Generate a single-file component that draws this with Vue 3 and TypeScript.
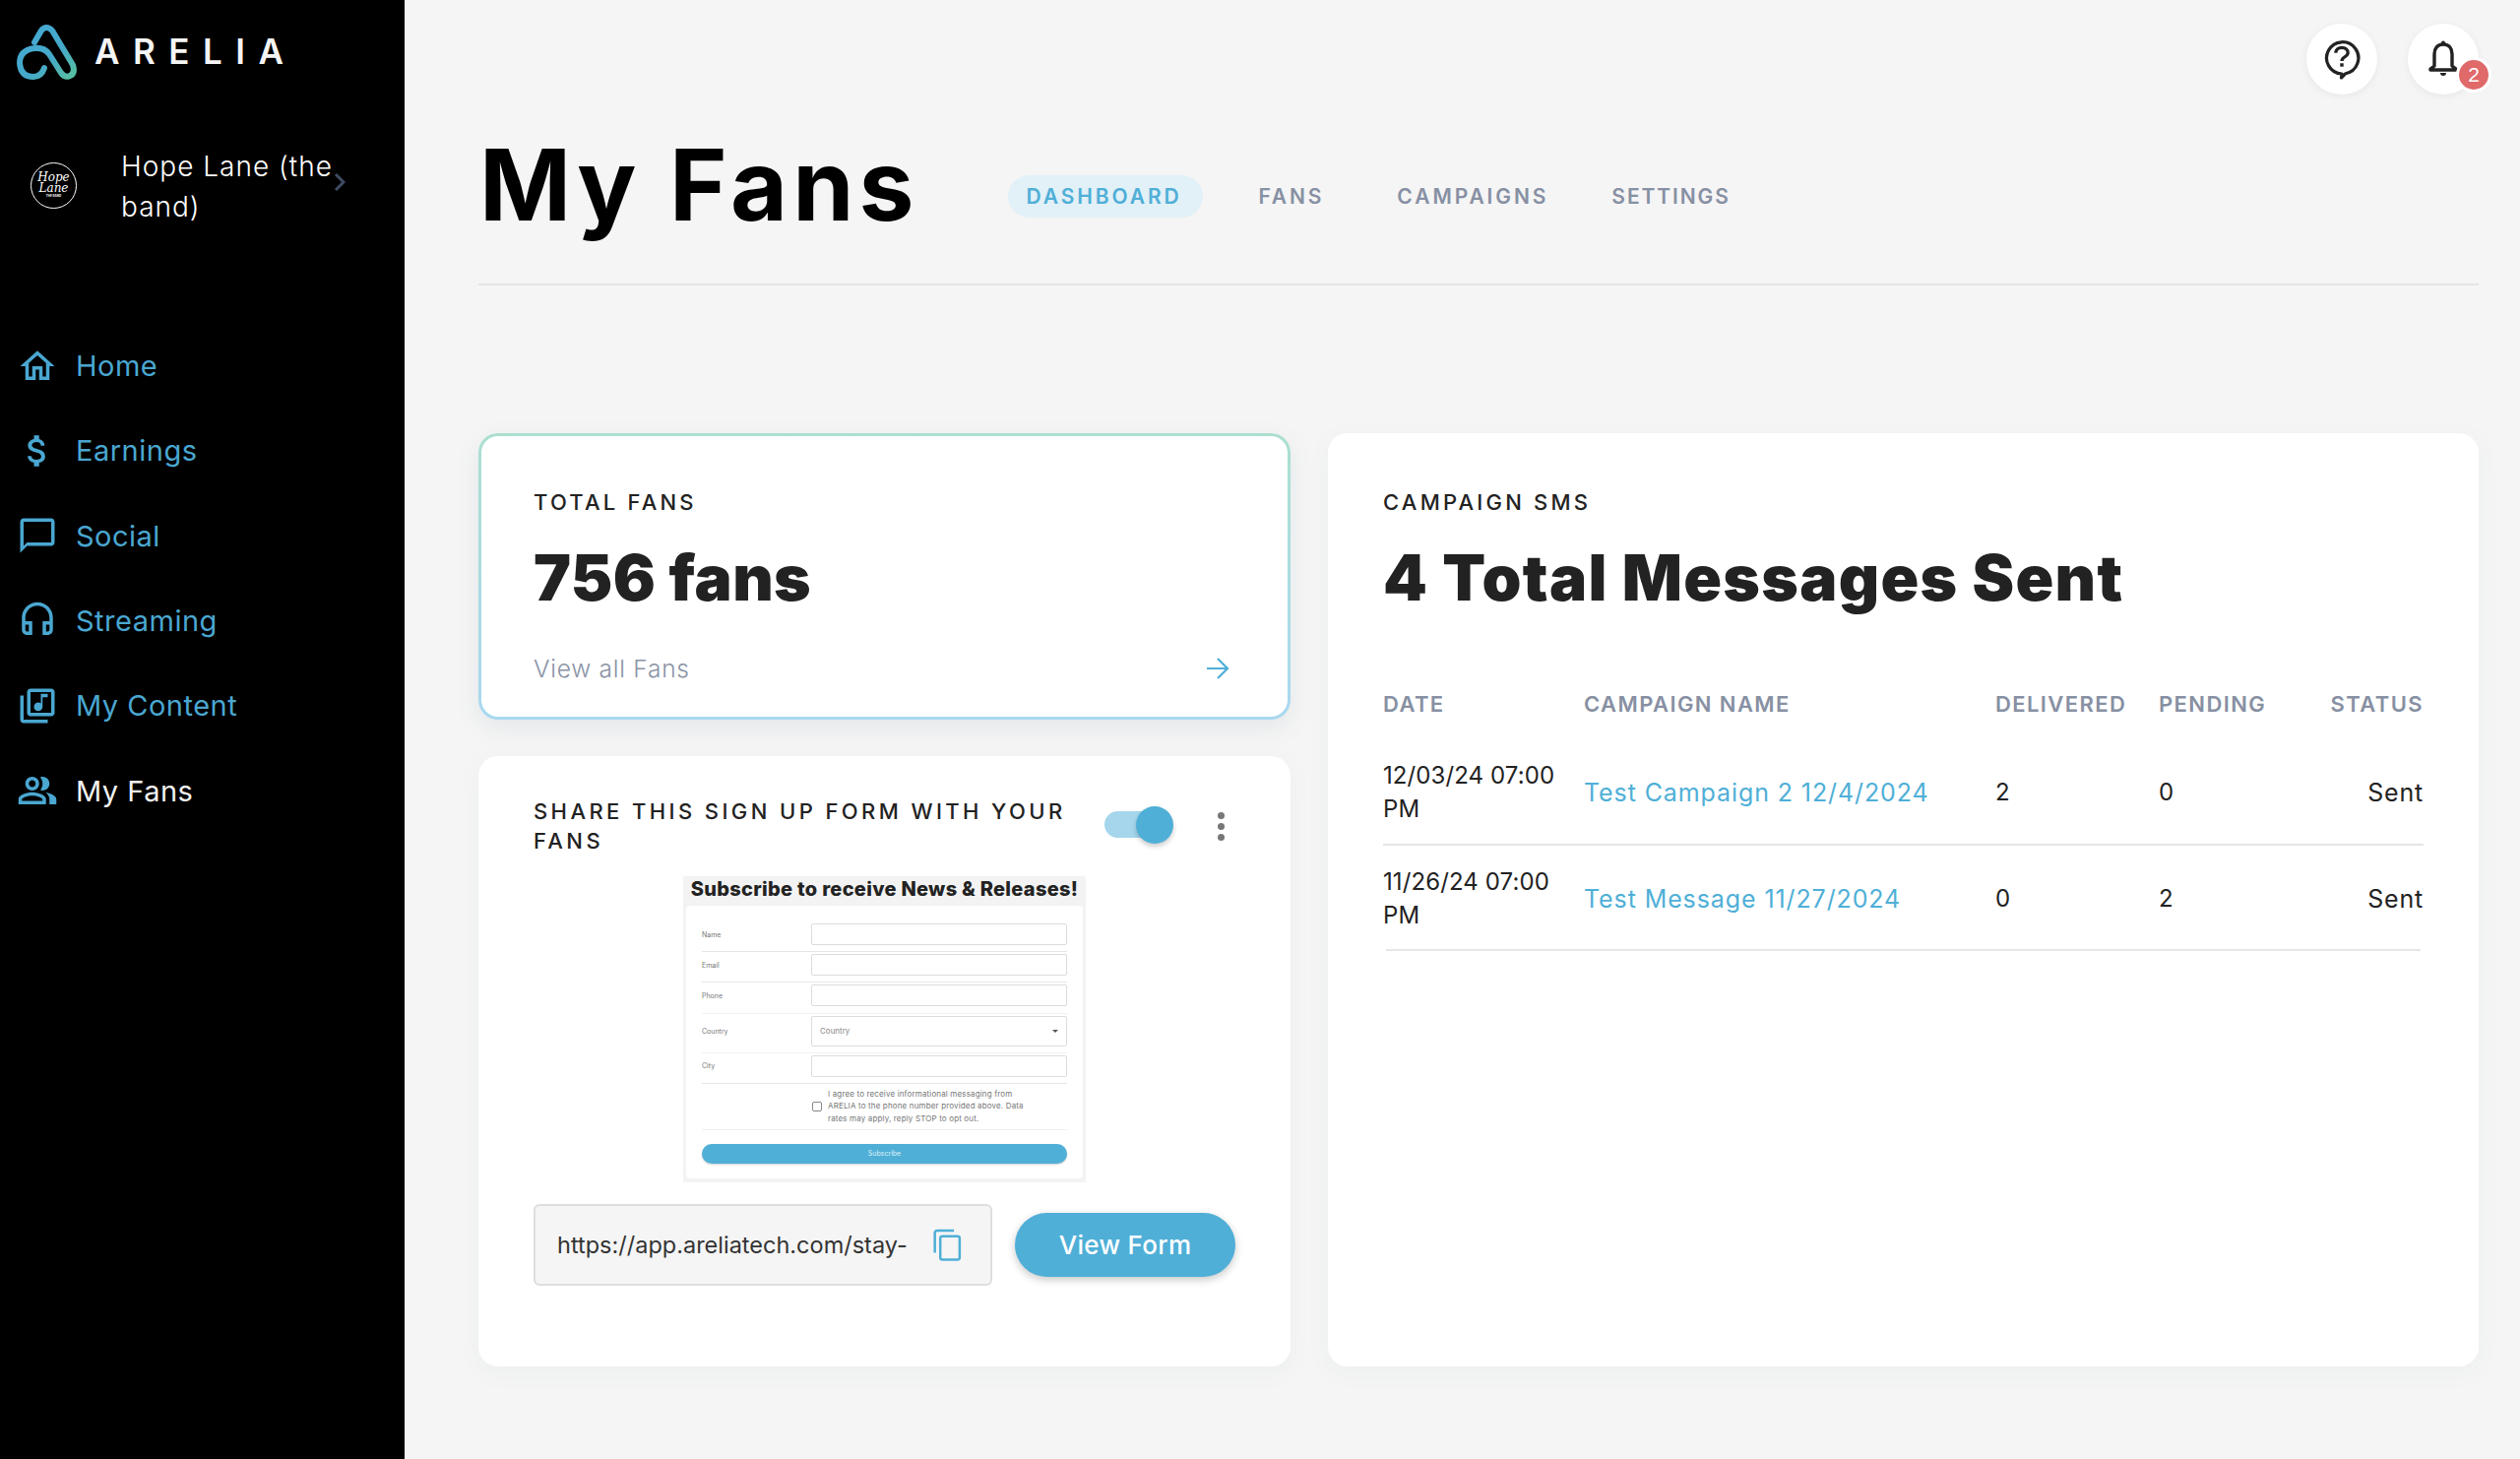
<script setup lang="ts">
interface NavItem { label: string; paths: string[]; active?: boolean }
interface Row { date: string; name: string; delivered: number; pending: number; status: string }
interface FormRow { label: string; kind?: 'select'; faint?: boolean }

const nav: NavItem[] = [
  { label: 'Home', paths: ['M12 5.69l5 4.5V18h-2v-6H9v6H7v-7.81l5-4.5M12 3L2 12h3v8h6v-6h2v6h6v-8h3L12 3z'] },
  { label: 'Earnings', paths: ['M11.8 10.9c-2.27-.59-3-1.2-3-2.15 0-1.09 1.01-1.85 2.7-1.85 1.78 0 2.44.85 2.5 2.1h2.21c-.07-1.72-1.12-3.3-3.21-3.81V3h-3v2.16c-1.94.42-3.5 1.68-3.5 3.61 0 2.31 1.91 3.46 4.7 4.13 2.5.6 3 1.48 3 2.41 0 .69-.49 1.79-2.7 1.79-2.06 0-2.87-.92-2.98-2.1h-2.2c.12 2.19 1.76 3.42 3.68 3.83V21h3v-2.15c1.95-.37 3.5-1.5 3.5-3.55 0-2.84-2.43-3.81-4.7-4.4z'] },
  { label: 'Social', paths: ['M20 2H4c-1.1 0-2 .9-2 2v18l4-4h14c1.1 0 2-.9 2-2V4c0-1.1-.9-2-2-2zm0 14H6l-2 2V4h16v12z'] },
  { label: 'Streaming', paths: ['M12 1c-4.97 0-9 4.03-9 9v7c0 1.66 1.34 3 3 3h3v-8H5v-2c0-3.87 3.13-7 7-7s7 3.13 7 7v2h-4v8h3c1.66 0 3-1.34 3-3v-7c0-4.97-4.03-9-9-9zM7 14v4H6c-.55 0-1-.45-1-1v-3h2zm12 3c0 .55-.45 1-1 1h-1v-4h2v3z'] },
  { label: 'My Content', paths: ['M20 2H8c-1.1 0-2 .9-2 2v12c0 1.1.9 2 2 2h12c1.1 0 2-.9 2-2V4c0-1.1-.9-2-2-2zm0 14H8V4h12v12zm-7.5-1c1.38 0 2.5-1.12 2.5-2.5V7h3V5h-4v5.51c-.42-.32-.93-.51-1.5-.51-1.38 0-2.5 1.12-2.5 2.5s1.12 2.5 2.5 2.5zM4 6H2v14c0 1.1.9 2 2 2h14v-2H4V6z'] },
  { label: 'My Fans', active: true, paths: ['M16.67 13.13C18.04 14.06 19 15.32 19 17v3h4v-3c0-2.18-3.57-3.47-6.33-3.87z', 'M15 12c2.21 0 4-1.79 4-4s-1.79-4-4-4c-.47 0-.91.1-1.33.24C14.5 5.27 15 6.58 15 8s-.5 2.73-1.33 3.76c.42.14.86.24 1.33.24z', 'M9 13c-2.67 0-8 1.34-8 4v3h16v-3c0-2.66-5.33-4-8-4zm6 5H3v-.99C3.2 16.29 6.3 15 9 15s5.8 1.29 6 2v1z', 'M9 12c2.21 0 4-1.79 4-4s-1.79-4-4-4-4 1.79-4 4 1.79 4 4 4zm0-6c1.1 0 2 .9 2 2s-.9 2-2 2-2-.9-2-2 .9-2 2-2z'] },
]
const tabs: string[] = ['DASHBOARD', 'FANS', 'CAMPAIGNS', 'SETTINGS']
const rows: Row[] = [
  { date: '12/03/24 07:00 PM', name: 'Test Campaign 2 12/4/2024', delivered: 2, pending: 0, status: 'Sent' },
  { date: '11/26/24 07:00 PM', name: 'Test Message 11/27/2024', delivered: 0, pending: 2, status: 'Sent' },
]
const formRows: FormRow[] = [
  { label: 'Name' },
  { label: 'Email' },
  { label: 'Phone', faint: true },
  { label: 'Country', kind: 'select', faint: true },
  { label: 'City' },
]
</script>

<template>
  <div class="app">
    <aside class="sidebar">
      <div class="brand">
        <svg class="logo" viewBox="0 0 61 57" fill="none">
          <defs>
            <linearGradient id="lg" x1="0" y1="0" x2="1" y2="1">
              <stop offset="0" stop-color="#45a9d6" />
              <stop offset="0.6" stop-color="#45a9c8" />
              <stop offset="1" stop-color="#58c0a0" />
            </linearGradient>
          </defs>
          <path d="M18 19 L25 7 Q30 1 36 7 L57 42 Q60 51 53 53.500 Q48 54.500 45 50 L33 31 Q28 24 18 25 Q3 27 3 40 Q4 54 17 54 Q25 54 28 45" stroke="url(#lg)" stroke-width="6" stroke-linecap="round" stroke-linejoin="round" />
        </svg>
        <span class="wordmark">ARELIA</span>
      </div>

      <div class="account">
        <div class="avatar">
          <span class="avatar-script">Hope<br />Lane</span>
          <span class="avatar-small">THE BAND</span>
        </div>
        <span class="account-name">Hope Lane (the band)</span>
        <svg class="chevron" viewBox="0 0 12 20" fill="none"><path d="M2 2l8 8-8 8" stroke="#3f4b63" stroke-width="3" /></svg>
      </div>

      <nav class="nav">
        <a v-for="item in nav" :key="item.label" class="nav-item" :class="{ active: item.active }">
          <svg class="nav-icon" viewBox="0 0 24 24" fill="#4aa7d1"><path v-for="p in item.paths" :key="p" :d="p" /></svg>
          <span>{{ item.label }}</span>
        </a>
      </nav>
    </aside>

    <main class="main">
      <div class="actions">
        <button class="round">
          <svg viewBox="0 0 40 44" width="38" height="42" fill="none">
            <path d="M24 37.500A17 17 0 1 0 20 37.800L19.500 42Z" stroke="#222" stroke-width="3.400" stroke-linejoin="round" />
            <path d="M13.500 15.500c0-3.700 2.900-5.800 6.500-5.800s6.500 2.200 6.500 5.500c0 4.600-6.500 4.300-6.500 8.800" stroke="#222" stroke-width="3.400" />
            <rect x="18.200" y="26.500" width="3.600" height="3.600" fill="#222" />
          </svg>
        </button>
        <button class="round">
          <svg viewBox="0 0 36 40" width="36" height="40" fill="none">
            <path d="M18 5c-6 0-9 4.500-9 10v12l-4 3v1h26v-1l-4-3V15c0-5.500-3-10-9-10z" stroke="#222" stroke-width="3.400" stroke-linejoin="round" />
            <rect x="16" y="1.500" width="4" height="4" rx="2" fill="#222" />
            <path d="M15 34h6a3 3 0 0 1-6 0z" fill="#222" />
          </svg>
          <span class="badge">2</span>
        </button>
      </div>

      <header class="page-head">
        <h1 class="page-title">My Fans</h1>
        <div class="tabs">
          <a v-for="(t, i) in tabs" :key="t" class="tab" :class="['tab-' + i, { on: i === 0 }]">{{ t }}</a>
        </div>
      </header>

      <section class="grid">
        <div class="left-col">
          <article class="card total">
            <div class="total-inner">
              <h2 class="eyebrow">TOTAL FANS</h2>
              <div class="big">756 fans</div>
              <div class="view-all">
                <span>View all Fans</span>
                <svg viewBox="0 0 24 24" width="24" height="24" fill="none"><path d="M1 12h21M12 2l10 10-10 10" stroke="#4fafd7" stroke-width="2.200" /></svg>
              </div>
            </div>
          </article>

          <article class="card share">
            <div class="share-head">
              <h2 class="eyebrow share-title">SHARE THIS SIGN UP FORM WITH YOUR FANS</h2>
              <div class="toggle"><span class="knob"></span></div>
              <div class="dots"><i></i><i></i><i></i></div>
            </div>

            <div class="preview">
              <div class="preview-title">Subscribe to receive News &amp; Releases!</div>
              <div class="preview-card">
                <div v-for="r in formRows" :key="r.label" class="f-row" :class="{ faint: r.faint, tall: r.kind === 'select' }">
                  <span class="f-label">{{ r.label }}</span>
                  <div class="f-input">
                    <template v-if="r.kind === 'select'"><span>Country</span><b class="caret"></b></template>
                  </div>
                </div>
                <div class="f-consent">
                  <i class="f-check"></i>
                  <span class="f-consent-text">I agree to receive informational messaging from<br />ARELIA to the phone number provided above. Data<br />rates may apply, reply STOP to opt out.</span>
                </div>
                <div class="f-submit">Subscribe</div>
              </div>
            </div>

            <div class="share-foot">
              <div class="url">
                <span class="url-text">https://app.areliatech.com/stay-</span>
                <svg viewBox="0 0 24 24" width="35" height="35" fill="none" stroke="#4fafd7" stroke-width="1.700"><rect x="7" y="6" width="13.500" height="16.300" rx="1.500" /><path d="M16.500 2H5A1.800 1.800 0 0 0 3.200 3.800V17.500" /></svg>
              </div>
              <button class="view-form">View Form</button>
            </div>
          </article>
        </div>

        <article class="card sms">
          <h2 class="eyebrow">CAMPAIGN SMS</h2>
          <div class="big">4 Total Messages Sent</div>
          <div class="table">
            <div class="tr th">
              <span>DATE</span><span>CAMPAIGN NAME</span><span>DELIVERED</span><span>PENDING</span><span class="right">STATUS</span>
            </div>
            <div v-for="r in rows" :key="r.name" class="tr td">
              <span class="date">{{ r.date }}</span>
              <a class="link">{{ r.name }}</a>
              <span>{{ r.delivered }}</span>
              <span>{{ r.pending }}</span>
              <span class="right sent">{{ r.status }}</span>
            </div>
          </div>
        </article>
      </section>
    </main>
  </div>
</template>

<style>
html, body { margin: 0; background: #f5f5f5; }
</style>

<style scoped>
* { box-sizing: border-box; }
.app {
  display: flex;
  width: 2560px;
  height: 1482px;
  overflow: hidden;
  background: #f5f5f5;
  font-family: Inter, "Open Sans", "Liberation Sans", sans-serif;
  color: #222;
}
.sidebar { width: 411px; flex: none; background: #000; display: flex; flex-direction: column; }
.brand { display: flex; align-items: center; height: 57px; margin: 24px 0 0 17px; }
.logo { width: 61px; height: 57px; flex: none; }
.wordmark { margin-left: 18px; color: #f4f4f4; font-size: 35px; font-weight: 600; letter-spacing: 13.500px; line-height: 1; }
.account { display: flex; align-items: flex-start; margin: 65px 0 0 31px; position: relative; height: 84px; }
.avatar { width: 47px; height: 47px; flex: none; margin-top: 19px; border: 1.500px solid #fff; border-radius: 50%; display: flex; flex-direction: column; align-items: center; justify-content: center; color: #fff; overflow: hidden; }
.avatar-script { font-family: "DejaVu Serif", serif; font-style: italic; font-size: 12px; line-height: 11px; text-align: center; }
.avatar-small { font-size: 3px; line-height: 5px; font-weight: 700; }
.account-name { margin: 3px 0 0 45px; width: 226px; color: #fff; font-size: 28px; font-weight: 300; line-height: 40.500px; letter-spacing: 1px; }
.chevron { position: absolute; left: 308px; top: 29px; width: 12px; height: 20px; }
.nav { display: flex; flex-direction: column; margin-top: 98.500px; }
.nav-item { display: flex; align-items: center; height: 86.300px; padding-left: 17px; color: #4aa7d1; font-size: 29px; font-weight: 400; letter-spacing: 0.500px; }
.nav-item.active { color: #f2f2f2; }
.nav-icon { width: 42px; height: 42px; flex: none; margin-right: 18px; }

.main { flex: 1; padding: 24px 42px 0 75px; min-width: 0; }
.actions { display: flex; justify-content: flex-end; gap: 31px; height: 72px; }
.round { position: relative; width: 72px; height: 72px; border: 0; padding: 0; border-radius: 50%; background: #fff; box-shadow: 0 2px 8px rgba(0,0,0,.06); display: flex; align-items: center; justify-content: center; }
.badge { position: absolute; left: 49px; top: 34px; width: 36px; height: 36px; border: 3px solid #fff; border-radius: 50%; background: #e0696a; color: #fff; font-size: 21px; line-height: 30px; text-align: center; }
.page-head { display: flex; align-items: center; height: 194px; border-bottom: 2px solid #e4e4e4; padding-bottom: 12px; }
.page-title { margin: 3px 0 0 1px; font-size: 100px; font-weight: 700; line-height: 1; color: #000; letter-spacing: 5px; }
.tabs { display: flex; align-items: center; margin-left: 91px; margin-top: 26px; }
.tab { display: block; color: #8790a3; font-size: 21px; font-weight: 600; letter-spacing: 2.900px; height: 43px; line-height: 43px; padding: 0 18px; border-radius: 22px; }
.tab.on { background: #e2f0f7; color: #4fafd7; width: 198px; white-space: nowrap; }
.tab-1 { margin-left: 56px; padding: 0; }
.tab-2 { margin-left: 74px; padding: 0; }
.tab-3 { margin-left: 64px; padding: 0; letter-spacing: 1.900px; }

.grid { display: grid; grid-template-columns: 825px 1169px; gap: 38px; margin-top: 150px; height: 948px; }
.left-col { display: flex; flex-direction: column; gap: 37px; min-height: 0; }
.card { background: #fff; border-radius: 20px; box-shadow: 0 6px 24px rgba(80,110,130,.05); }
.total { height: 291px; flex: none; padding: 3px; background: linear-gradient(180deg, #abdfd0, #a9d8f0); box-shadow: 0 8px 24px rgba(80,110,130,.1); }
.total-inner { height: 100%; background: #fff; border-radius: 17px; padding: 52px 53px 0; }
.eyebrow { margin: 0; font-size: 22px; line-height: 30px; font-weight: 500; letter-spacing: 3.200px; color: #222; }
.big { margin-top: 27px; font-size: 64px; line-height: 70px; font-weight: 900; letter-spacing: 0.400px; color: #222; }
.view-all { display: flex; justify-content: space-between; align-items: center; margin-top: 41px; margin-right: 6px; color: #8a93a6; font-size: 24.500px; font-weight: 300; letter-spacing: 0.750px; line-height: 32px; }
.share { flex: 1; padding: 41px 56px 0 56px; min-height: 0; }
.share-head { position: relative; }
.share-title { width: 560px; letter-spacing: 3.400px; }
.toggle { position: absolute; left: 580px; top: 15px; width: 50px; height: 27px; border-radius: 14px; background: #a5d6ec; }
.knob { position: absolute; left: 32px; top: -5px; width: 38px; height: 38px; border-radius: 50%; background: #4fafd7; box-shadow: 0 3px 5px rgba(0,0,0,.2); }
.dots { position: absolute; left: 695px; top: 16px; display: flex; flex-direction: column; gap: 4px; }
.dots i { display: block; width: 7px; height: 7px; border-radius: 50%; background: #777; }
.preview { width: 409px; height: 311px; margin: 21px 0 0 152px; background: #f3f3f3; padding: 0 3px 4px; }
.preview-title { height: 30px; font-size: 20px; line-height: 26px; font-weight: 800; letter-spacing: 0.300px; text-align: center; white-space: nowrap; color: #222; }
.preview-card { height: 277px; background: #fff; border-radius: 4px; padding: 16px 16px 0 16px; }
.f-row { display: flex; align-items: center; height: 31px; border-bottom: 1px solid #e6e6e6; padding-bottom: 4px; color: #777; font-size: 7px; }
.f-row.faint { border-bottom-color: #f2f2f2; height: 31.500px; }
.f-row.tall { height: 40px; }
.f-label { width: 111px; flex: none; }
.f-input { flex: 1; height: 22px; border: 1px solid #dcdcdc; border-radius: 2px; display: flex; align-items: center; justify-content: space-between; padding: 0 8px; font-size: 8px; color: #888; }
.tall .f-input { height: 31px; }
.caret { width: 0; height: 0; border: 3px solid transparent; border-top-color: #555; border-bottom: 0; }
.f-consent { display: flex; align-items: center; height: 47px; padding-left: 111px; border-bottom: 1px solid #f0f0f0; font-size: 8px; line-height: 12.500px; color: #777; }
.f-consent-text { white-space: nowrap; letter-spacing: 0.150px; }
.f-check { display: block; width: 10px; height: 10px; flex: none; border: 1px solid #888; border-radius: 2px; margin: 0 6px 0 1px; }
.f-submit { height: 20px; margin-top: 14px; border-radius: 10px; background: #4fafd7; color: #dff1f9; text-align: center; font-size: 7px; line-height: 20px; box-shadow: 0 1px 2px rgba(0,0,0,.2); }
.share-foot { display: flex; align-items: center; margin-top: 22px; gap: 23px; }
.url { width: 466px; height: 83px; flex: none; display: flex; align-items: center; justify-content: space-between; padding: 0 26px 0 22px; background: #f5f5f5; border: 2px solid #dedede; border-radius: 6px; }
.url-text { white-space: nowrap; font-size: 23.500px; font-weight: 400; color: #333; }
.view-form { width: 224px; height: 65px; flex: none; border: 0; border-radius: 33px; background: #4fafd7; color: #fff; font-family: inherit; font-size: 26px; font-weight: 500; letter-spacing: 0.300px; box-shadow: 0 3px 8px rgba(0,0,0,.22); }

.sms { padding: 55px 56px 0; }
.sms .big { letter-spacing: 1.300px; }
.table { margin-top: 72px; }
.tr { display: grid; grid-template-columns: 204px 418px 166px 1fr auto; align-items: center; }
.th { color: #8790a3; font-size: 22px; font-weight: 600; letter-spacing: 1.400px; height: 42px; white-space: nowrap; }
.td { height: 107px; padding-top: 2px; font-size: 24px; line-height: 34px; color: #222; border-bottom: 2px solid #e6e6e6; }
.th + .td { height: 108px; margin-top: 15px; }
.td + .td { margin: 0 3px; padding-left: 0; grid-template-columns: 201px 418px 166px 1fr auto; }
.date { width: 190px; letter-spacing: 0.100px; }
.td + .td .date { margin-left: -3px; }
.link { color: #4fafd7; font-size: 25px; letter-spacing: 0.900px; white-space: nowrap; }
.right { text-align: right; }
.sent { font-size: 25px; letter-spacing: 0.800px; }
.td + .td .sent { margin-right: -3px; }
</style>
